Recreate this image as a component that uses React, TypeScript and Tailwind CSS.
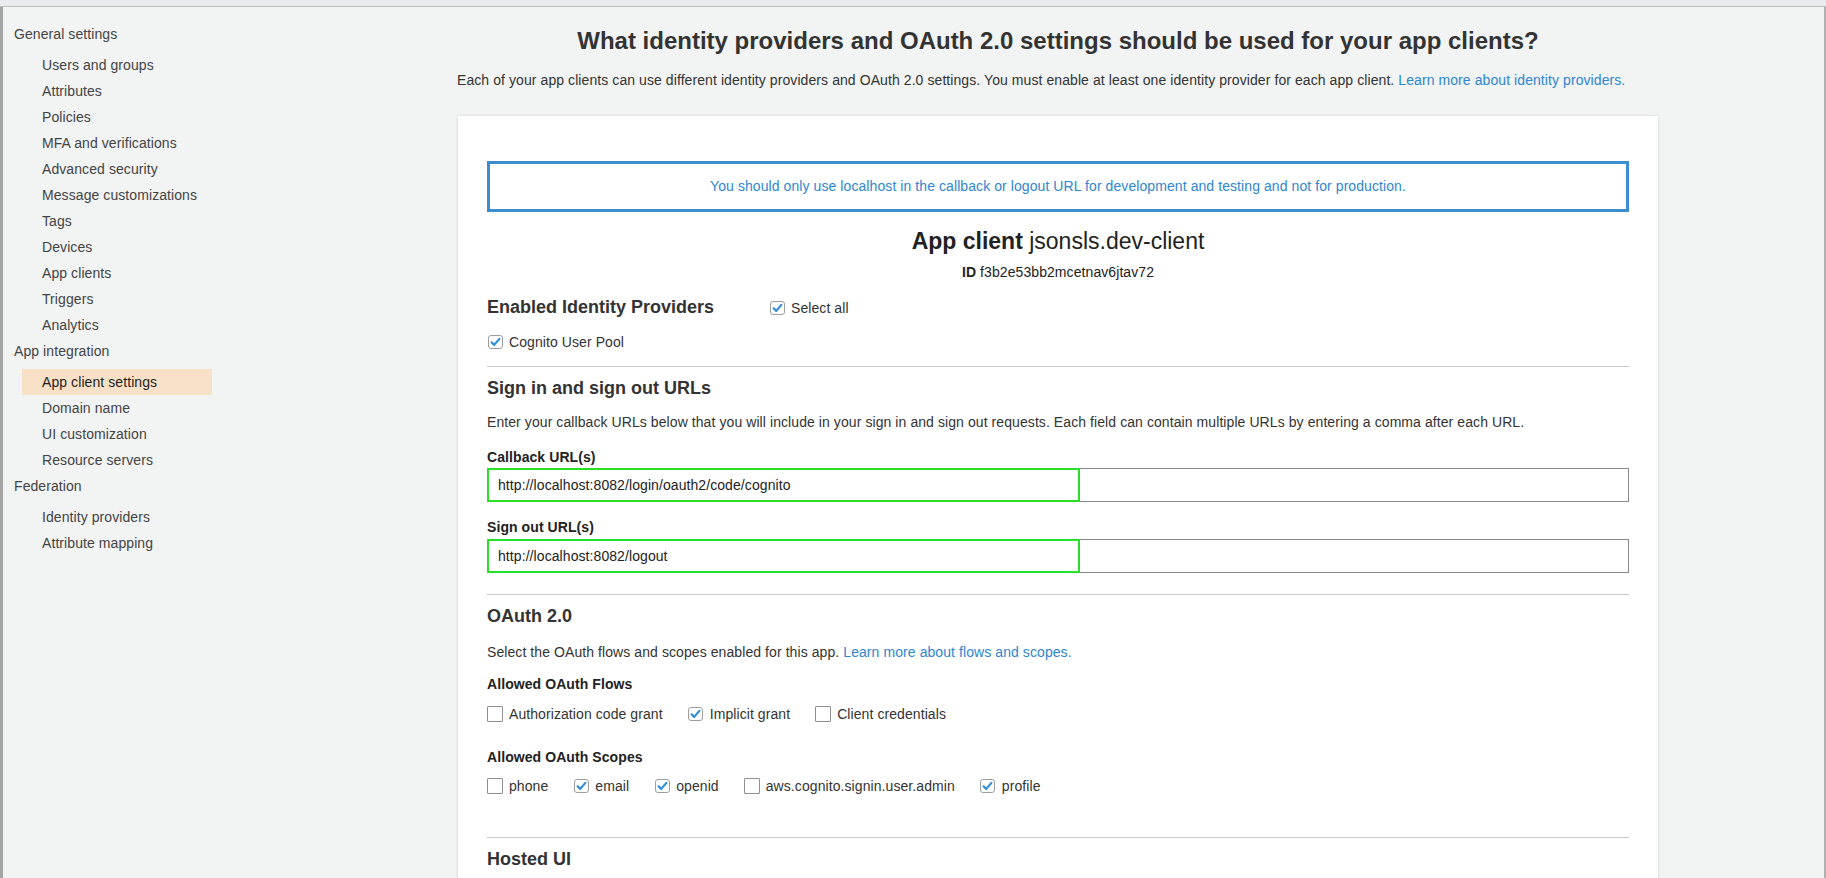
import type { ReactNode } from "react";

const generalItems = [
  "Users and groups",
  "Attributes",
  "Policies",
  "MFA and verifications",
  "Advanced security",
  "Message customizations",
  "Tags",
  "Devices",
  "App clients",
  "Triggers",
  "Analytics",
];

const integrationItems = [
  "App client settings",
  "Domain name",
  "UI customization",
  "Resource servers",
];

const federationItems = ["Identity providers", "Attribute mapping"];

function NavGroup({ title, items, active }: { title: string; items: string[]; active?: string }) {
  return (
    <div>
      <div className="h-[26px] leading-[26px] mb-[5px] text-[#444]">{title}</div>
      {items.map((item) => (
        <div
          key={item}
          className={
            item === active
              ? "ml-[8px] w-[190px] pl-[20px] h-[26px] leading-[26px] bg-[#f8e1c6] text-[#1e1e1e]"
              : "ml-[8px] pl-[20px] h-[26px] leading-[26px] text-[#444]"
          }
        >
          {item}
        </div>
      ))}
    </div>
  );
}

function Box({ checked }: { checked?: boolean }) {
  if (checked) {
    return (
      <span className="w-4 h-4 flex items-center justify-center shrink-0">
        <span className="w-[15px] h-[14px] rounded-[3px] border border-[#9d9d9d] bg-white flex items-center justify-center">
          <svg width="11" height="10" viewBox="0 0 11 10">
            <path
              d="M1.6 5.3 L4.2 7.9 L9.4 1.9"
              fill="none"
              stroke="#2f8ddb"
              strokeWidth="2.2"
              strokeLinecap="round"
              strokeLinejoin="round"
            />
          </svg>
        </span>
      </span>
    );
  }
  return <span className="w-4 h-4 shrink-0 border border-[#8f8f8f] bg-white rounded-[1px]" />;
}

function Check({ label, checked }: { label: string; checked?: boolean }) {
  return (
    <label className="flex items-center gap-[6px] h-5 text-[#333]">
      <Box checked={checked} />
      <span>{label}</span>
    </label>
  );
}

function SectionTitle({ children, className = "" }: { children: ReactNode; className?: string }) {
  return (
    <h2 className={`text-[18px] leading-[22px] font-bold tracking-normal text-[#333] ${className}`}>{children}</h2>
  );
}

function UrlField({ value }: { value: string }) {
  return (
    <div className="relative h-[34px] border border-[#8a8a8a] bg-white flex items-center pl-[10px] text-[#222]">
      {value}
      {/* green highlight drawn over the field in the screenshot */}
      <div className="absolute -left-[1px] -top-[1px] w-[593px] h-[34px] border-2 border-[#27e027] pointer-events-none" />
    </div>
  );
}

function Divider({ className = "" }: { className?: string }) {
  return <div className={`h-px bg-[#cacaca] ${className}`} />;
}

export default function App() {
  return (
    <div className="w-[1826px] h-[878px] overflow-hidden bg-[#f2f3f3] text-[14px] tracking-[0.08px] text-[#444] font-['Liberation_Sans',Arial,sans-serif] flex flex-col">
      <div className="h-[6px] shrink-0 bg-[#e9ebef] border-b border-[#bcbcbc] box-content" />
      <div className="flex flex-1 min-h-0 border-l-[3px] border-l-[#a3a3a3] border-r-2 border-r-[#b0b0b0]">
        <aside className="w-[455px] shrink-0 pt-[14px] pl-[11px]">
          <NavGroup title="General settings" items={generalItems} />
          <NavGroup title="App integration" items={integrationItems} active="App client settings" />
          <NavGroup title="Federation" items={federationItems} />
        </aside>

        <main className="w-[1200px] shrink-0 pt-[20px]">
          <h1 className="text-[24px] leading-[28px] font-bold tracking-normal text-[#333] text-center">
            What identity providers and OAuth 2.0 settings should be used for your app clients?
          </h1>
          <p className="mt-[15px] leading-[20px] text-[#333] -ml-px">
            Each of your app clients can use different identity providers and OAuth 2.0 settings. You must enable at
            least one identity provider for each app client.{" "}
            <a className="text-[#2f86d0]">Learn more about identity providers.</a>
          </p>

          <section className="mt-[26px] bg-white shadow-[0_0_3px_rgba(0,0,0,0.14)] px-[29px] pt-[45px] pb-10 text-[#333]">
            <div className="h-[51px] border-[3px] border-[#3b8dcf] flex items-center justify-center text-[#2f86d0]">
              You should only use localhost in the callback or logout URL for development and testing and not for
              production.
            </div>

            <div className="mt-[16px] text-center text-[23px] leading-[26px] tracking-normal text-[#222]">
              <span className="font-bold">App client</span> jsonsls.dev-client
            </div>
            <div className="mt-[8px] text-center leading-[20px] text-[#222]">
              <span className="font-bold">ID</span> f3b2e53bb2mcetnav6jtav72
            </div>

            <div className="mt-[13px] flex items-center">
              <SectionTitle className="w-[282px]">Enabled Identity Providers</SectionTitle>
              <div className="mt-[3px]">
                <Check label="Select all" checked />
              </div>
            </div>
            <div className="mt-[14px]">
              <Check label="Cognito User Pool" checked />
            </div>

            <Divider className="mt-[14px]" />

            <SectionTitle className="mt-[10px]">Sign in and sign out URLs</SectionTitle>
            <p className="mt-[13px] leading-[20px]">
              Enter your callback URLs below that you will include in your sign in and sign out requests. Each field
              can contain multiple URLs by entering a comma after each URL.
            </p>

            <div className="mt-[15px] font-bold leading-[20px] text-[#222]">Callback URL(s)</div>
            <div className="mt-px">
              <UrlField value="http://localhost:8082/login/oauth2/code/cognito" />
            </div>
            <div className="mt-[15px] font-bold leading-[20px] text-[#222]">Sign out URL(s)</div>
            <div className="mt-[2px]">
              <UrlField value="http://localhost:8082/logout" />
            </div>

            <Divider className="mt-[21px]" />

            <SectionTitle className="mt-[10px]">OAuth 2.0</SectionTitle>
            <p className="mt-[15px] leading-[20px]">
              Select the OAuth flows and scopes enabled for this app.{" "}
              <a className="text-[#2f86d0]">Learn more about flows and scopes.</a>
            </p>

            <div className="mt-[12px] font-bold leading-[20px] text-[#222]">Allowed OAuth Flows</div>
            <div className="mt-[10px] flex gap-[25px]">
              <Check label="Authorization code grant" />
              <Check label="Implicit grant" checked />
              <Check label="Client credentials" />
            </div>

            <div className="mt-[23px] font-bold leading-[20px] text-[#222]">Allowed OAuth Scopes</div>
            <div className="mt-[9px] flex gap-[25px]">
              <Check label="phone" />
              <Check label="email" checked />
              <Check label="openid" checked />
              <Check label="aws.cognito.signin.user.admin" />
              <Check label="profile" checked />
            </div>

            <Divider className="mt-[41px]" />

            <SectionTitle className="mt-[10px]">Hosted UI</SectionTitle>
          </section>
        </main>
      </div>
    </div>
  );
}
